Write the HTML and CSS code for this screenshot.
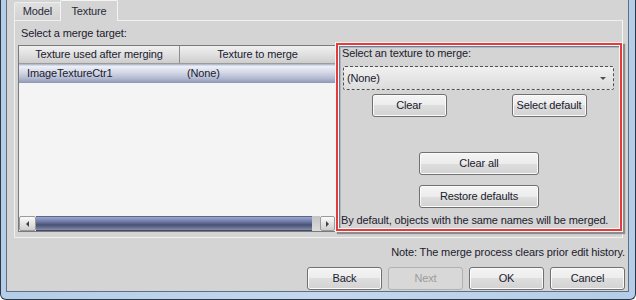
FILE: index.html
```html
<!doctype html>
<html>
  <head>
    <title>Merge</title>
    <link rel="stylesheet" href="styles.css">
  </head>
  <body>
    <div class="window">
      <div class="client">
        <div class="tabs">
          <div class="tab tab-model">Model</div>
          <div class="tab tab-active">Texture</div>
        </div>
        <div class="panel">
          <div class="targets">
            <div class="caption">Select a merge target:</div>
            <div class="list">
              <div class="list-head">
                <div class="col col-a">Texture used after merging</div>
                <div class="col col-b">Texture to merge</div>
              </div>
              <div class="list-body">
                <div class="row selected">
                  <div class="cell col-a">ImageTextureCtr1</div>
                  <div class="cell col-b">(None)</div>
                </div>
              </div>
              <div class="hscroll">
                <div class="sb-btn sb-left"><span class="arrow-left"></span></div>
                <div class="sb-thumb"></div>
                <div class="sb-track"></div>
                <div class="sb-btn sb-right"><span class="arrow-right"></span></div>
              </div>
            </div>
          </div>
          <div class="highlight">
            <div class="group">
              <div class="group-caption">Select an texture to merge:</div>
              <div class="combo">
                <span class="combo-text">(None)</span>
                <span class="combo-arrow"></span>
              </div>
              <div class="pair">
                <div class="btn btn-small">Clear</div>
                <div class="btn btn-small">Select default</div>
              </div>
              <div class="btn btn-wide btn-clear-all">Clear all</div>
              <div class="btn btn-wide btn-restore">Restore defaults</div>
              <div class="hint">By default, objects with the same names will be merged.</div>
            </div>
          </div>
        </div>
        <div class="note">Note: The merge process clears prior edit history.</div>
        <div class="actions">
          <div class="btn">Back</div>
          <div class="btn btn-disabled">Next</div>
          <div class="btn">OK</div>
          <div class="btn">Cancel</div>
        </div>
      </div>
    </div>
  </body>
</html>
```

FILE: styles.css
```css
body {
  margin: 0;
  font-family: "Liberation Sans", Arial, sans-serif;
  font-size: 11px;
  line-height: 13px;
  letter-spacing: -0.12px;
  color: #20202e;
}
.window {
  width: 636px;
  height: 300px;
  box-sizing: border-box;
  border: 1px solid #2e3742;
  border-top: 0;
  border-radius: 0 0 6px 6px;
  padding: 0 6px 6px 5px;
  background: linear-gradient(90deg, #b4cde8, #c3d8ee 50%, #b4cde8);
}
.client {
  height: 292px;
  box-sizing: border-box;
  border: 1px solid #5f6e82;
  border-top: 0;
  padding: 0 3px 0 7px;
  background: #d4d4d4;
}
.tabs {
  display: flex;
  height: 20px;
  align-items: flex-end;
}
.tab {
  height: 18px;
  box-sizing: border-box;
  padding-top: 2px;
  text-align: center;
  border: 1px solid #eeeeee;
  border-bottom: 0;
  border-radius: 2px 2px 0 0;
  background: linear-gradient(#e0e0e0, #d2d2d2);
  color: #2a2a3a;
}
.tab-model {
  width: 47px;
}
.tab-active {
  position: relative;
  width: 58px;
  height: 21px;
  margin-bottom: -1px;
  margin-left: -1px;
  padding-top: 4px;
  border-color: #f4f4f4;
  background: #d4d4d4;
}
.panel {
  display: grid;
  grid-template-columns: 318px 286px;
  width: 609px;
  height: 218px;
  box-sizing: border-box;
  padding-left: 3px;
  border: 1px solid #f0f0f0;
  border-right-color: #f6f6f6;
}
.caption {
  padding: 6px 3px 5px 3px;
}
.list {
  display: flex;
  flex-direction: column;
  height: 187px;
  box-sizing: border-box;
  border: 1px solid #7a7a7a;
  background: #f4f4f4;
}
.list-head {
  display: flex;
  height: 18px;
  box-sizing: border-box;
  border-bottom: 1px solid #9c9c9c;
  background: linear-gradient(#f0f0f0, #e2e2e2 45%, #cdcdcd);
}
.list-head .col {
  text-align: center;
  padding-top: 2px;
}
.col-a {
  width: 161px;
  box-sizing: border-box;
  border-right: 1px solid #8e8e8e;
}
.col-b {
  flex: 1;
}
.list-body {
  flex: 1;
}
.row {
  display: flex;
  height: 19px;
}
.row.selected {
  background: linear-gradient(#a6aec8, #eef0f6 12%, #d3d7e6 45%, #b3bad2 75%, #8e97b5);
}
.cell {
  padding: 3px 0 0 7px;
  border: 0;
}
.row .col-a {
  padding-left: 8px;
}
.hscroll {
  display: flex;
  height: 15px;
}
.sb-btn {
  display: flex;
  align-items: center;
  justify-content: center;
  box-sizing: border-box;
  border: 1px solid #9a9a9a;
  border-radius: 2px;
  background: linear-gradient(#fafafa, #e4e4e4 50%, #cfcfcf);
}
.sb-left {
  width: 17px;
}
.sb-right {
  width: 15px;
}
.arrow-left {
  border-top: 3px solid transparent;
  border-bottom: 3px solid transparent;
  border-right: 3px solid #404040;
}
.arrow-right {
  border-top: 3px solid transparent;
  border-bottom: 3px solid transparent;
  border-left: 3px solid #404040;
}
.sb-thumb {
  width: 276px;
  box-sizing: border-box;
  border-top: 1px solid #5d6686;
  border-bottom: 1px solid #434a63;
  background: linear-gradient(#9aa6d0, #7d89b6 25%, #626c93 45%, #4a5273 60%, #636d90 80%, #858ead);
}
.sb-track {
  flex: 1;
  background: linear-gradient(#c4c4c4, #dcdcdc);
}
.highlight {
  margin-top: 22px;
  height: 188px;
  box-sizing: border-box;
  padding: 1px;
  border: 2px solid #e63b3d;
  background: #fafafa;
  box-shadow: 0 0 0 1px #f4f4f4, 2px 2px 1px 1px #8c8c8c;
}
.group {
  display: flex;
  flex-direction: column;
  height: 100%;
  box-sizing: border-box;
  padding-top: 1px;
  background: #d4d4d4;
  box-shadow: inset 1px 1px 0 #6f7d90, inset 2px 2px 0 #aeb7c3;
}
.group-caption {
  margin-left: 3px;
}
.combo {
  display: flex;
  align-items: center;
  justify-content: space-between;
  height: 24px;
  box-sizing: border-box;
  margin: 6px 5px 0 4px;
  padding: 0 7px 0 3px;
  border: 1px dashed #505050;
  border-radius: 2px;
  background: linear-gradient(#f0f0f0, #e6e6e6 50%, #dcdcdc);
}
.combo-arrow {
  border-left: 3px solid transparent;
  border-right: 3px solid transparent;
  border-top: 3px solid #505050;
}
.pair {
  display: grid;
  grid-template-columns: 1fr 1fr;
  justify-items: center;
  margin-top: 4px;
}
.btn {
  display: flex;
  align-items: center;
  justify-content: center;
  width: 75px;
  height: 23px;
  box-sizing: border-box;
  border: 1px solid #707070;
  border-radius: 3px;
  background: linear-gradient(#f4f4f4, #ececec 50%, #dedede 50%, #d2d2d2);
  box-shadow: inset 0 0 0 1px #fbfbfb;
}
.btn-wide {
  align-self: center;
  width: 120px;
}
.btn-clear-all {
  margin-top: 35px;
}
.btn-restore {
  margin-top: 10px;
}
.hint {
  margin: 6px 0 0 2px;
  white-space: nowrap;
}
.note {
  margin-top: 8px;
  text-align: right;
}
.actions {
  display: flex;
  justify-content: flex-end;
  gap: 6px;
  margin-top: 8px;
}
.btn-disabled {
  color: #9c9c9c;
  border-color: #adb2b5;
  background: #d8d8d8;
  box-shadow: none;
}
```
